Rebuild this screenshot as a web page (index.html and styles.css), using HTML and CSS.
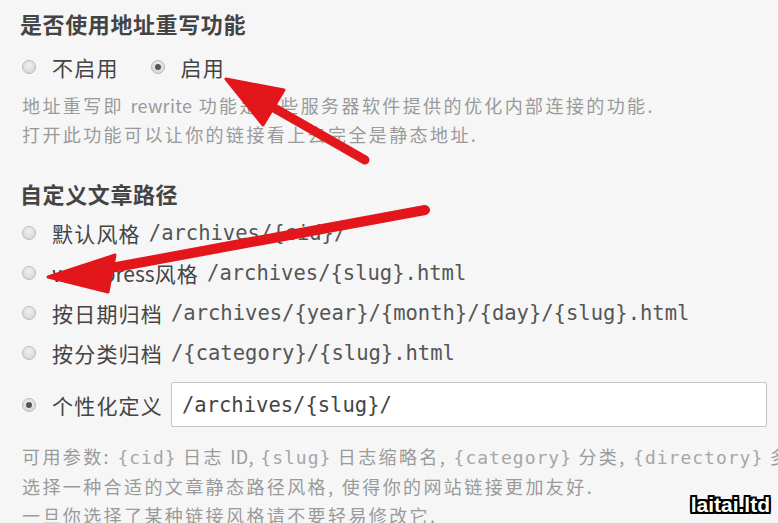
FILE: index.html
```html
<!DOCTYPE html>
<html lang="zh-CN">
<head>
    <meta charset="UTF-8">
    <meta name="viewport" content="width=device-width, initial-scale=1.0">
    <title>永久链接设置</title>
    <link rel="stylesheet" href="styles.css">
</head>
<body>
    <div class="page">
        <section class="option-group">
            <h2 class="group-title">是否使用地址重写功能</h2>
            <div class="inline-choices">
                <label class="choice"><input type="radio" name="rewrite" value="0"><span>不启用</span></label>
                <label class="choice"><input type="radio" name="rewrite" value="1" checked><span>启用</span></label>
            </div>
            <p class="description">地址重写即 <span class="latin">rewrite</span> 功能是某些服务器软件提供的优化内部连接的功能.<br>打开此功能可以让你的链接看上去完全是静态地址.</p>
        </section>

        <section class="option-group second">
            <h2 class="group-title">自定义文章路径</h2>
            <ul class="choice-list">
                <li><label class="choice"><input type="radio" name="postPattern"><span>默认风格</span> <code class="path">/archives/{cid}/</code></label></li>
                <li><label class="choice"><input type="radio" name="postPattern"><span><span class="latin">wordpress</span>风格</span> <code class="path">/archives/{slug}.html</code></label></li>
                <li><label class="choice"><input type="radio" name="postPattern"><span>按日期归档</span> <code class="path">/archives/{year}/{month}/{day}/{slug}.html</code></label></li>
                <li><label class="choice"><input type="radio" name="postPattern"><span>按分类归档</span> <code class="path">/{category}/{slug}.html</code></label></li>
                <li class="custom-row">
                    <label class="choice"><input type="radio" name="postPattern" checked><span>个性化定义</span></label>
                    <div class="pattern-box">/archives/{slug}/</div>
                </li>
            </ul>
            <p class="description help">可用参数: <code>{cid}</code> 日志 <span class="latin">ID,</span> <code>{slug}</code> 日志缩略名, <code>{category}</code> 分类, <code>{directory}</code> 多级分类, <code>{year}</code> 年, <code>{month}</code> 月, <code>{day}</code> 日<br>选择一种合适的文章静态路径风格, 使得你的网站链接更加友好.<br>一旦你选择了某种链接风格请不要轻易修改它.</p>
        </section>
    </div>

    <!-- annotation arrows drawn over the form -->
    <svg class="annotations" viewBox="0 0 778 523" xmlns="http://www.w3.org/2000/svg">
        <line x1="365" y1="160" x2="262" y2="101" stroke="#e3161c" stroke-width="9" stroke-linecap="round"/>
        <polygon points="226,79 284,90 263,125" fill="#e3161c" stroke="#e3161c" stroke-width="3" stroke-linejoin="round"/>
        <line x1="425" y1="210" x2="100" y2="270" stroke="#e3161c" stroke-width="10" stroke-linecap="round"/>
        <polygon points="48,277 115,255 108,292" fill="#e3161c" stroke="#e3161c" stroke-width="3" stroke-linejoin="round"/>
    </svg>

    <div class="watermark">laitai.ltd</div>
</body>
</html>
```

FILE: styles.css
```css
body, html {
    margin: 0;
    height: 100%;
    background-color: #f6f6f6;
    overflow: hidden;
    font-family: "Noto Sans CJK SC", "Noto Sans", sans-serif;
}

.page {
    padding: 8px 20px 0 20px;
    overflow: hidden;
}

.option-group { margin: 0; }
.option-group.second { margin-top: 29px; }

.group-title {
    margin: 0;
    font-size: 22px;
    line-height: 30px;
    letter-spacing: 0.6px;
    font-weight: bold;
    color: #444;
}

.inline-choices {
    display: flex;
    gap: 30px;
    margin-top: 9px;
    height: 40px;
    align-items: center;
}

.choice {
    display: flex;
    align-items: center;
    font-size: 21px;
    letter-spacing: 1.2px;
    color: #444;
    white-space: nowrap;
}

.choice .latin { letter-spacing: 0; }

.choice input[type="radio"] {
    appearance: none;
    -webkit-appearance: none;
    width: 14px;
    height: 14px;
    margin: 0 16px 0 2px;
    border-radius: 50%;
    border: 1px solid #b8b8b8;
    background: radial-gradient(circle at 50% 35%, #f0f0f0 0%, #d2d2d2 100%);
    position: relative;
    flex-shrink: 0;
    box-sizing: border-box;
}

.choice input[type="radio"]:checked::after {
    content: "";
    position: absolute;
    left: 3px;
    top: 3px;
    width: 6px;
    height: 6px;
    border-radius: 50%;
    background: #555;
}

.path {
    font-family: "DejaVu Sans Mono", "Liberation Mono", monospace;
    font-size: 20.5px;
    letter-spacing: 0;
    color: #555;
    margin-left: 8px;
}

.description {
    margin: 4px 0 0 2px;
    font-size: 18px;
    line-height: 29px;
    letter-spacing: 2.4px;
    color: #9a9a9a;
    white-space: nowrap;
}

.description .latin { letter-spacing: 0.3px; }

.description code {
    font-family: "DejaVu Sans Mono", "Liberation Mono", monospace;
    font-size: 18px;
    letter-spacing: 1px;
    color: #a6a6a6;
}

.choice-list {
    list-style: none;
    margin: 5px 0 0 0;
    padding: 0;
}

.choice-list li {
    height: 40px;
    display: flex;
    align-items: center;
}

.choice-list li.custom-row {
    height: 45px;
    margin: 9px 0;
    gap: 8px;
}

.pattern-box {
    flex: none;
    width: 596px;
    height: 45px;
    box-sizing: border-box;
    display: flex;
    align-items: center;
    padding: 0 10px;
    border: 1px solid #c4c4c4;
    border-radius: 2px;
    background: #fff;
    font-family: "DejaVu Sans Mono", "Liberation Mono", monospace;
    font-size: 20.5px;
    color: #444;
}

.help { margin-top: 15px; }

.annotations {
    position: absolute;
    top: 0;
    left: 0;
    width: 778px;
    height: 523px;
    pointer-events: none;
}

.watermark {
    position: absolute;
    right: 8px;
    bottom: 6px;
    font-family: "Liberation Sans", Arial, sans-serif;
    font-weight: bold;
    font-size: 21px;
    color: #fff;
    text-shadow: -2px -2px 0 #000, 2px -2px 0 #000, -2px 2px 0 #000, 2px 2px 0 #000,
                 0 -2px 0 #000, 0 2px 0 #000, -2px 0 0 #000, 2px 0 0 #000;
}
```
